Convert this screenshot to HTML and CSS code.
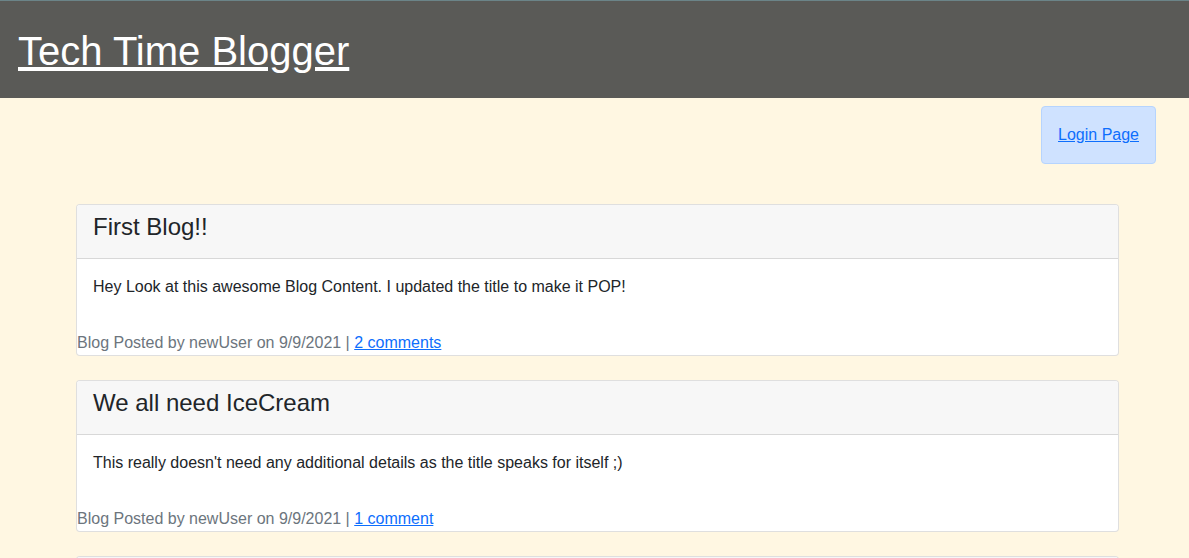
FILE: index.html
```html
<!DOCTYPE html>
<html>
<head>
<meta charset="utf-8">
<link rel="stylesheet" href="styles.css">
</head>
<body>
<header class="site-header">
  <h1 class="site-title"><a href="#">Tech Time Blogger</a></h1>
</header>
<nav class="nav-row">
  <div class="login-btn"><a href="#">Login Page</a></div>
</nav>
<main class="posts">
  <article class="card">
    <div class="card-header"><h3>First Blog!!</h3></div>
    <div class="card-body">
      <p>Hey Look at this awesome Blog Content. I updated the title to make it POP!</p>
    </div>
    <div class="card-footer">Blog Posted by newUser on 9/9/2021 | <a href="#">2 comments</a></div>
  </article>
  <article class="card">
    <div class="card-header"><h3>We all need IceCream</h3></div>
    <div class="card-body">
      <p>This really doesn't need any additional details as the title speaks for itself ;)</p>
    </div>
    <div class="card-footer">Blog Posted by newUser on 9/9/2021 | <a href="#">1 comment</a></div>
  </article>
  <article class="card card-empty">
    <div class="card-header"></div>
  </article>
</main>
</body>
</html>
```
FILE: styles.css
```css
* { box-sizing: border-box; }
html, body { margin: 0; padding: 0; }
body {
  background: #fff7e2;
  font-family: "Liberation Sans", Arial, sans-serif;
  font-size: 16px;
  line-height: 1.5;
  color: #212529;
}
a { color: #0d6efd; text-decoration: underline; }
.site-header {
  background: #5a5a57;
  border-top: 1px solid #6b8488;
  height: 98px;
  padding: 26px 18px 0;
}
.site-title {
  margin: 0;
  font-size: 40px;
  font-weight: 400;
  line-height: 1.2;
}
.site-title a { color: #ffffff; }
.nav-row {
  display: flex;
  justify-content: flex-end;
  padding: 8px 33px 0 0;
}
.login-btn {
  background: #cfe2ff;
  border: 1px solid #b6d4fe;
  border-radius: 4px;
  padding: 16px 16px;
  line-height: 24px;
}
.login-btn a { color: #0d6efd; }
.posts {
  display: flex;
  flex-direction: column;
  gap: 24px;
  margin: 40px 70px 0 76px;
}
.card {
  background: #fff;
  border: 1px solid rgba(0,0,0,0.125);
  border-radius: 4px;
  overflow: hidden;
}
.card-header {
  background: #f7f7f7;
  border-bottom: 1px solid rgba(0,0,0,0.125);
  padding: 8px 16px;
}
.card-header h3 {
  margin: 0 0 8px;
  font-size: 24px;
  font-weight: 400;
  line-height: 1.2;
}
.card-empty .card-header { height: 54px; }
.card-body {
  padding: 16px;
}
.card-body p { margin: 0 0 16px; }
.card-footer {
  color: #6c757d;
  line-height: 24px;
}
```
